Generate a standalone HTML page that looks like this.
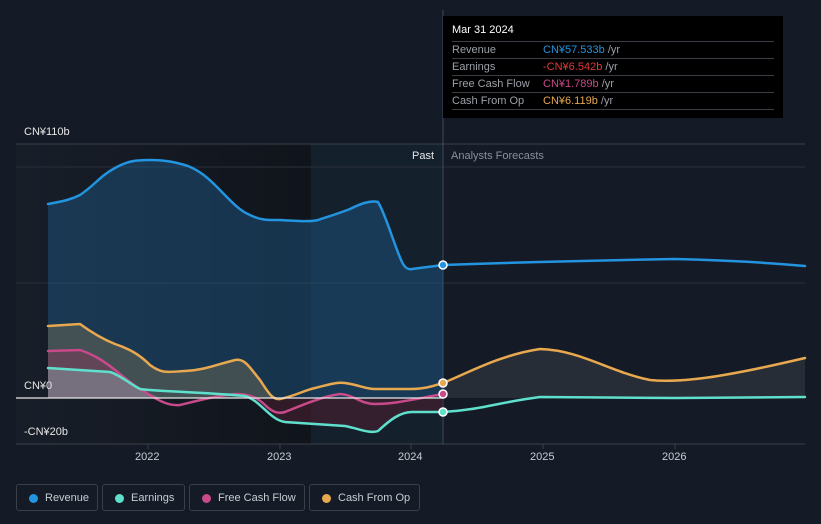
<!DOCTYPE html>
<html><head><meta charset="utf-8"><style>
body{margin:0;width:821px;height:524px;background:#151b26;font-family:"Liberation Sans",sans-serif;overflow:hidden;position:relative}
.t{position:absolute;font-size:11px}
.tip{position:absolute;left:443px;top:16px;width:340px;height:102px;background:#000;}
.tip .h{position:absolute;left:9px;top:8px;color:#fff;font-size:11px}
.row{position:absolute;left:9px;width:322px;height:17px;border-top:1px solid #3a3d44;font-size:11px;color:#9aa0a8;line-height:17px}
.row span{position:absolute;left:91px}
.leg{position:absolute;top:484px;height:27px;border:1px solid #3a3f4a;border-radius:3px;color:#c8ccd2;font-size:11px;line-height:27px;box-sizing:border-box}
.leg i{position:absolute;left:12px;top:9px;width:9px;height:9px;border-radius:50%}
.leg b{font-weight:normal;position:absolute;left:28px}
</style></head><body>
<svg width="821" height="524" style="position:absolute;left:0;top:0">
<defs>
<linearGradient id="pd" x1="0" x2="1"><stop offset="0" stop-color="#181e29"/><stop offset="1" stop-color="#10141b"/></linearGradient>
</defs>
<rect x="16" y="144" width="295" height="300" fill="url(#pd)"/>
<rect x="311" y="144" width="132" height="300" fill="#15202d"/>
<line x1="16" y1="144" x2="805" y2="144" stroke="#3a3f4a"/>
<line x1="16" y1="167" x2="805" y2="167" stroke="#2a303a"/>
<line x1="16" y1="283" x2="805" y2="283" stroke="#2a303a"/>
<line x1="16" y1="444" x2="805" y2="444" stroke="#3a3f4a"/>
<line x1="443" y1="10" x2="443" y2="444" stroke="#3a4a5a"/>
<path d="M48,204 C65,201 72,199 80,195 C95,185 100,176 115,168 C128,161 135,160 150,160 C165,160 175,162 188,166 C200,171 208,178 216,186 C230,200 238,210 250,215 C262,221 270,220 280,220 C300,221 310,222 318,220 C330,216 340,213 350,209 C360,204 370,200 378,202 C386,215 394,245 402,262 C405,268 408,270 412,269 L443,265 L443,398 L48,398 Z" fill="#1e5a8a" opacity="0.45"/>
<path d="M48,326 L80,324 C95,335 105,340 115,344 C130,349 140,355 150,365 C162,374 168,372 185,371 C205,370 215,365 235,360 C245,358 250,368 260,380 L275,398 L48,398 Z" fill="#6b6a55" opacity="0.5"/>
<path d="M48,351 L80,350 C95,355 105,362 115,370 C125,378 135,387 145,392 L160,398 L48,398 Z" fill="#8a3a5a" opacity="0.45"/>
<path d="M48,368 L110,372 C120,375 130,384 140,389 L160,398 L48,398 Z" fill="#8a9aa5" opacity="0.5"/>
<path d="M260,398 C270,405 275,425 290,424 L345,427 C360,430 370,435 378,431 C390,420 400,412 412,412 L443,412 L443,398 Z" fill="#4a2030" opacity="0.6"/>
<path d="M443,383 C470,372 500,355 540,349 C580,350 610,372 650,380 C680,383 720,378 805,358 L805,398 L443,398 Z" fill="#3a3f45" opacity="0.5"/>
<g fill="none" stroke-width="2.5" stroke-linecap="round">
<path d="M48,204 C65,201 72,199 80,195 C95,185 100,176 115,168 C128,161 135,160 150,160 C165,160 175,162 188,166 C200,171 208,178 216,186 C230,200 238,210 250,215 C262,221 270,220 280,220 C300,221 310,222 318,220 C330,216 340,213 350,209 C360,204 370,200 378,202 C386,215 394,245 402,262 C405,268 408,270 412,269 L443,265 C500,263 560,261 675,259 C720,260 760,262 805,266" stroke="#2394df"/>
<path d="M48,326 L80,324 C95,335 105,340 115,344 C130,349 140,355 150,365 C162,374 168,372 185,371 C205,370 215,365 235,360 C245,358 250,368 260,380 C268,392 272,400 280,399 C295,396 305,390 315,388 C328,385 335,382 345,383 C360,385 365,389 375,389 L410,389 C425,389 433,386 443,383 C470,372 500,355 540,349 C580,350 610,372 650,380 C680,383 720,378 805,358" stroke="#e8a84f"/>
<path d="M48,351 L80,350 C95,355 105,362 115,370 C125,378 135,387 145,392 C160,402 170,406 180,405 C200,400 215,396 235,394 C250,394 258,398 265,405 C272,412 278,414 285,412 C300,406 320,397 340,394 C355,395 360,404 375,404 C395,404 415,399 443,394" stroke="#c84a8a"/>
<path d="M48,368 L110,372 C120,375 130,384 140,389 C150,391 200,392 245,396 C260,400 270,420 285,422 L315,424 L345,426 C360,429 370,434 378,431 C390,420 400,412 412,412 L443,412 C480,410 500,402 540,397 L675,398 L805,397" stroke="#5fe0cc"/>
</g>
<line x1="16" y1="398" x2="443" y2="398" stroke="#e8e8e8" stroke-width="1.2"/>
<g stroke="#fff" stroke-width="1.5">
<circle cx="443" cy="265" r="4" fill="#2394df"/>
<circle cx="443" cy="383" r="4" fill="#e8a84f"/>
<circle cx="443" cy="394" r="4" fill="#c84a8a"/>
<circle cx="443" cy="412" r="4" fill="#5fe0cc"/>
</g>
<g stroke="#3a3f4a"><line x1="148" y1="444" x2="148" y2="449"/><line x1="280" y1="444" x2="280" y2="449"/><line x1="411" y1="444" x2="411" y2="449"/><line x1="543" y1="444" x2="543" y2="449"/><line x1="675" y1="444" x2="675" y2="449"/></g>
</svg>
<div class="t" style="left:24px;top:126px;color:#e6e6e6">CN¥110b</div>
<div class="t" style="left:24px;top:380px;color:#e6e6e6">CN¥0</div>
<div class="t" style="left:24px;top:426px;color:#e6e6e6">-CN¥20b</div>
<div class="t" style="left:412px;top:150px;color:#e6e6e6">Past</div>
<div class="t" style="left:451px;top:150px;color:#8a9099">Analysts Forecasts</div>
<div class="t" style="left:135px;top:451px;color:#c8ccd2">2022</div>
<div class="t" style="left:267px;top:451px;color:#c8ccd2">2023</div>
<div class="t" style="left:398px;top:451px;color:#c8ccd2">2024</div>
<div class="t" style="left:530px;top:451px;color:#c8ccd2">2025</div>
<div class="t" style="left:662px;top:451px;color:#c8ccd2">2026</div>
<div class="tip">
<div class="h">Mar 31 2024</div>
<div class="row" style="top:25px">Revenue<span><em style="font-style:normal;color:#2394df">CN¥57.533b</em> /yr</span></div>
<div class="row" style="top:42px">Earnings<span><em style="font-style:normal;color:#e03a3a">-CN¥6.542b</em> /yr</span></div>
<div class="row" style="top:59px">Free Cash Flow<span><em style="font-style:normal;color:#c84a8a">CN¥1.789b</em> /yr</span></div>
<div class="row" style="top:76px">Cash From Op<span><em style="font-style:normal;color:#e8a84f">CN¥6.119b</em> /yr</span></div>
<div class="row" style="top:93px;height:0"></div>
</div>
<div class="leg" style="left:16px;width:82px"><i style="background:#2394df"></i><b>Revenue</b></div>
<div class="leg" style="left:102px;width:83px"><i style="background:#5fe0cc"></i><b>Earnings</b></div>
<div class="leg" style="left:189px;width:116px"><i style="background:#c84a8a"></i><b>Free Cash Flow</b></div>
<div class="leg" style="left:309px;width:111px"><i style="background:#e8a84f"></i><b>Cash From Op</b></div>
</body></html>
